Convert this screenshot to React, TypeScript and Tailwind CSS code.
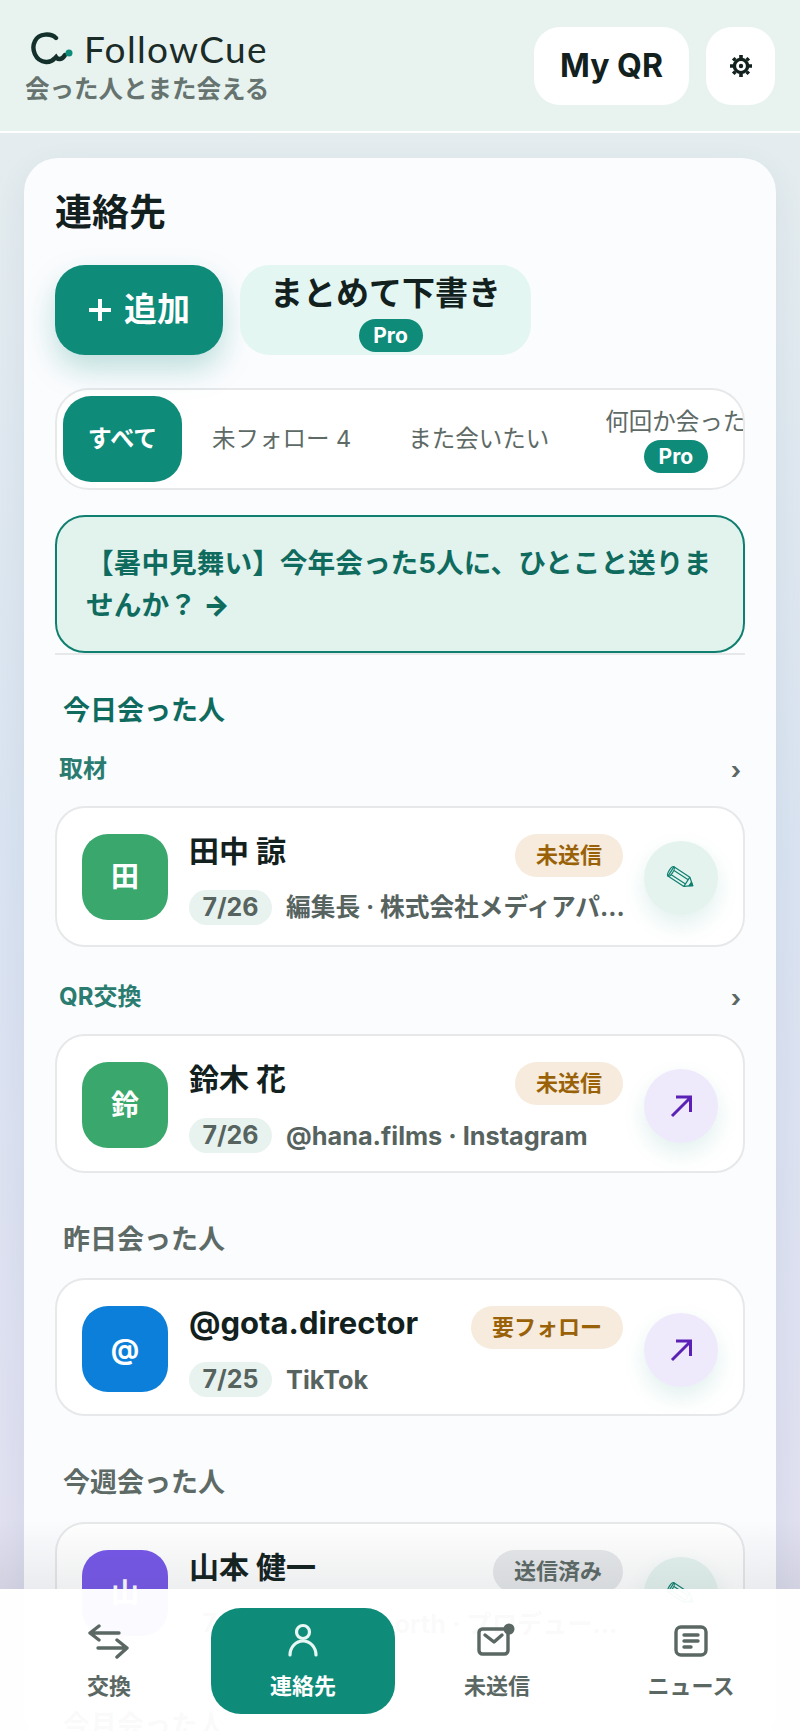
import * as React from 'react';

const FONT = '"Inter", "Noto Sans CJK JP", sans-serif';

function ProBadge() {
  return (
    <span className="flex h-[33px] w-[64px] items-center justify-center rounded-full bg-[#0f8b7a] text-[21px] font-bold leading-none text-white">
      Pro
    </span>
  );
}

function PencilIcon() {
  return (
    <svg width="32" height="26" viewBox="0 0 32 26" fill="none" stroke="#0f8070" strokeWidth="1.2" strokeLinejoin="round">
      <g transform="rotate(33 16 13)">
        <path d="M4 7.5h19l7 5.5-7 5.5H4z" />
        <ellipse cx="4" cy="13" rx="2" ry="5.5" />
        <path d="M6 10.5h17M6 15.5h17M23 7.5v11" />
        <path d="M27 11l3 2-3 2z" fill="#0f8070" />
      </g>
    </svg>
  );
}

function GearIcon() {
  return (
    <svg width="24" height="24" viewBox="-12 -12 24 24" fill="none" stroke="#12211e">
      <circle r="6.6" strokeWidth="3.4" />
      <circle r="2.2" fill="#12211e" stroke="none" />
      <path
        strokeWidth="3.6"
        d="M0-11v3M0 8v3M-11 0h3M8 0h3M-7.8-7.8l2.1 2.1M5.7 5.7l2.1 2.1M7.8-7.8 5.7-5.7M-5.7 5.7l-2.1 2.1"
      />
    </svg>
  );
}

type Contact = {
  initial: string;
  avatar: string;
  name: string;
  nameClass?: string;
  status: string;
  statusClass: string;
  date: string;
  meta: string;
  metaClass?: string;
  action: 'edit' | 'open';
};

function ContactCard({ c, className = '' }: { c: Contact; className?: string }) {
  return (
    <div className={`flex items-start rounded-[30px] border-2 border-[#e6e8ea] bg-white pl-[25px] pr-[25px] pt-[26px] ${className}`}>
      <div
        className={`flex h-[86px] w-[86px] shrink-0 items-center justify-center rounded-[26px] text-[28px] font-bold text-white ${c.avatar}`}
      >
        {c.initial}
      </div>
      <div className="ml-[21px] flex w-[434px] shrink-0 flex-col">
        <div className="flex h-[43px] items-start justify-between">
          <span className={`font-bold leading-[34px] text-[#12211e] ${c.nameClass ?? 'text-[30px]'}`}>{c.name}</span>
          <span className={`flex h-[43px] items-center rounded-full px-[21px] text-[22px] font-bold ${c.statusClass}`}>
            {c.status}
          </span>
        </div>
        <div className="mr-[-6px] mt-[13px] flex items-center">
          <span className="flex h-[35px] w-[83px] shrink-0 items-center justify-center rounded-full bg-[#e8f3ef] text-[25px] font-bold text-[#56635f]">
            {c.date}
          </span>
          <span className={`ml-[14px] truncate font-bold leading-[35px] text-[#56635f] ${c.metaClass ?? 'text-[25.3px]'}`}>{c.meta}</span>
        </div>
      </div>
      <div
        className={`ml-[21px] mt-[7px] flex h-[74px] w-[74px] shrink-0 items-center justify-center rounded-full shadow-[0_10px_22px_rgba(15,139,122,0.12)] ${
          c.action === 'edit' ? 'bg-[#e4f3ee]' : 'bg-[#eeeafc]'
        }`}
      >
        {c.action === 'edit' ? (
          <PencilIcon />
        ) : (
          <svg width="24" height="24" viewBox="0 0 24 24" fill="none" stroke="#5b21b6" strokeWidth="3">
            <path d="M3 22 21 4M7 3h14.5v15" />
          </svg>
        )}
      </div>
    </div>
  );
}

function GroupLabel({ label, className = '' }: { label: string; className?: string }) {
  return (
    <div className={`flex items-center justify-between pl-[4px] pr-[4px] ${className}`}>
      <span className="text-[24px] font-bold leading-[30px] text-[#2a7c70]">{label}</span>
      <span className="mt-[5px] text-[24px] font-bold leading-[30px] text-[#5a6763]">›</span>
    </div>
  );
}

const amber = 'bg-[#f6ebdc] text-[#9a6208]';

const NAV = [
  {
    label: '交換',
    icon: (
      <svg width="42" height="36" viewBox="0 0 42 36" fill="none" stroke="#5a6763" strokeWidth="3.4" strokeLinecap="round" strokeLinejoin="round">
        <path d="M31 10H2M11 3l-9 7 9 7M10 25h29M29 17l10 8-10 9" />
      </svg>
    ),
  },
  {
    label: '連絡先',
    active: true,
    icon: (
      <svg width="34" height="36" viewBox="0 0 34 36" fill="none" stroke="#e8f7f3" strokeWidth="3.2" strokeLinecap="round">
        <circle cx="17" cy="9" r="6.5" />
        <path d="M4 32c0-8 6-14 13-14s13 6 13 14" />
      </svg>
    ),
  },
  {
    label: '未送信',
    icon: (
      <svg width="40" height="36" viewBox="0 0 40 36" fill="none" stroke="#5a6763" strokeWidth="3.4" strokeLinejoin="round">
        <rect x="2" y="6" width="29" height="25" rx="3.5" />
        <path d="m8 12 9 7 8-7" strokeLinecap="round" />
        <circle cx="32" cy="6" r="5.5" fill="#5a6763" stroke="none" />
      </svg>
    ),
  },
  {
    label: 'ニュース',
    icon: (
      <svg width="34" height="34" viewBox="0 0 34 34" fill="none" stroke="#5a6763" strokeWidth="3.4" strokeLinecap="round">
        <rect x="2" y="3" width="30" height="28" rx="5" />
        <path d="M10 11h14M10 17h14M10 23h7" />
      </svg>
    ),
  },
];

export default function App() {
  return (
    <div
      className="relative h-[1731px] w-[800px] overflow-hidden bg-gradient-to-b from-[#e6eeee] via-[#d9e3f1] to-[#e2dff0]"
      style={{ fontFamily: FONT }}
    >
      <header className="flex h-[133px] items-start justify-between border-b-2 border-white bg-[#e8f3ef] pl-[25px] pr-[25px] pt-[27px]">
        <div className="flex flex-col">
          <div className="ml-[6px] flex h-[44px] items-center">
            <svg width="44" height="34" viewBox="0 0 44 34" fill="none" strokeWidth="4.4" strokeLinecap="round">
              <path d="M25 6C20 1 8 1 4 9c-4 8 0 20 11 21 6 .5 8-3 10-5 2 3 6 3 9-2" stroke="#14302b" />
              <circle cx="38" cy="21" r="3.5" fill="#0f8b7a" />
            </svg>
            <span className="ml-[9px] mt-[-2px] text-[37px] leading-none tracking-[0.035em] text-[#1b2b28]" style={{ fontFamily: 'Lato, sans-serif' }}>
              FollowCue
            </span>
          </div>
          <span className="mt-[3px] text-[24.5px] font-bold leading-[30px] text-[#66736f]">会った人とまた会える</span>
        </div>
        <div className="flex gap-[17px]">
          <div className="flex h-[78px] w-[155px] items-center justify-center rounded-[26px] bg-white text-[32px] font-bold text-[#12211e]">
            My QR
          </div>
          <div className="flex h-[78px] w-[69px] items-center justify-center rounded-[26px] bg-white">
            <GearIcon />
          </div>
        </div>
      </header>

      <main className="mx-[24px] mt-[25px] rounded-[34px] bg-[#fbfcfe] px-[31px] pt-[30px] shadow-[0_8px_30px_rgba(60,90,120,0.07)]">
        <h1 className="text-[37px] font-bold leading-[50px] text-[#12211e]">連絡先</h1>

        <div className="mt-[27px] flex gap-[17px]">
          <div className="flex h-[90px] w-[168px] items-center justify-center gap-[12px] rounded-[30px] bg-[#0f8b7a] text-[33px] font-bold text-white shadow-[0_14px_30px_rgba(15,139,122,0.26)]">
            <svg width="24" height="24" viewBox="0 0 24 24" stroke="white" strokeWidth="4">
              <path d="M12 1v22M1 12h22" />
            </svg>
            追加
          </div>
          <div className="flex h-[90px] w-[291px] flex-col items-center rounded-[30px] bg-[#e3f6f1] pt-[6px]">
            <span className="text-[33px] font-bold leading-[44px] text-[#12211e]">まとめて下書き</span>
            <span className="ml-[10px] mt-[4px]">
              <ProBadge />
            </span>
          </div>
        </div>

        <div className="mt-[33px] flex h-[102px] items-center overflow-hidden rounded-[34px] border-2 border-[#e6e8ea] bg-white pl-[6px]">
          <div className="flex h-[86px] w-[119px] shrink-0 items-center justify-center rounded-[28px] bg-[#0f8b7a] text-[24px] font-bold text-white">
            すべて
          </div>
          <span className="ml-[30px] shrink-0 text-[23.5px] text-[#5d6a66]">未フォロー 4</span>
          <span className="ml-[57px] shrink-0 text-[23.5px] text-[#5d6a66]">また会いたい</span>
          <div className="ml-[56px] flex shrink-0 flex-col items-center">
            <span className="text-[23.5px] leading-[32px] text-[#5d6a66]">何回か会った</span>
            <span className="mt-[2px]">
              <ProBadge />
            </span>
          </div>
        </div>

        <div className="mt-[25px] h-[138px] rounded-[30px] border-2 border-[#0f7f6f] bg-[#e2f3ee] pl-[29px] pr-[24px] pt-[25px] text-[27.7px] font-bold leading-[42px] text-[#0f6b5e]">
          【暑中見舞い】今年会った5人に、ひとこと送りませんか？ <span className="font-black">→</span>
        </div>
        <div className="h-[2px] bg-[#e6e8ea]" />

        <h2 className="ml-[8px] mt-[38px] text-[27px] font-bold leading-[36px] text-[#0f6b5e]">今日会った人</h2>

        <GroupLabel label="取材" className="mt-[22px]" />
        <ContactCard
          className="mt-[20px] h-[141px]"
          c={{
            initial: '田',
            avatar: 'bg-[#3aa76d]',
            name: '田中 諒',
            status: '未送信',
            statusClass: amber,
            date: '7/26',
            meta: '編集長 · 株式会社メディアパートナーズ',
            metaClass: 'text-[24.7px]',
            action: 'edit',
          }}
        />

        <GroupLabel label="QR交換" className="mt-[32px]" />
        <ContactCard
          className="mt-[20px] h-[139px]"
          c={{
            initial: '鈴',
            avatar: 'bg-[#3aa76d]',
            name: '鈴木 花',
            status: '未送信',
            statusClass: amber,
            date: '7/26',
            meta: '@hana.films · Instagram',
            action: 'open',
          }}
        />

        <h2 className="ml-[8px] mt-[49px] text-[27px] font-bold leading-[36px] text-[#5d6a66]">昨日会った人</h2>
        <ContactCard
          className="mt-[20px] h-[138px]"
          c={{
            initial: '@',
            avatar: 'bg-[#0b7fd9]',
            name: '@gota.director',
            nameClass: 'text-[31px]',
            status: '要フォロー',
            statusClass: amber,
            date: '7/25',
            meta: 'TikTok',
            action: 'open',
          }}
        />

        <h2 className="ml-[8px] mt-[49px] text-[27px] font-bold leading-[36px] text-[#5d6a66]">今週会った人</h2>
        <ContactCard
          className="mt-[21px] h-[138px]"
          c={{
            initial: '山',
            avatar: 'bg-[#7657e8]',
            name: '山本 健一',
            status: '送信済み',
            statusClass: 'bg-[#e6e8ea] text-[#5d6a66]',
            date: '7/24',
            meta: '@kenji.north · プロデューサー',
            action: 'edit',
          }}
        />
        <h2 className="ml-[8px] mt-[48px] text-[27px] font-bold leading-[36px] text-[#5d6a66]">今月会った人</h2>
      </main>

      <div className="absolute inset-x-0 bottom-[142px] h-[70px] bg-gradient-to-b from-transparent to-[rgba(60,70,80,0.09)]" />
      <nav className="absolute inset-x-0 bottom-0 grid h-[142px] grid-cols-4 gap-[10px] bg-white/[0.97] px-[17px] pt-[19px]">
        {NAV.map((item) => (
          <div
            key={item.label}
            className={`flex h-[106px] flex-col items-center justify-start rounded-[30px] pt-[13px] ${
              item.active ? 'bg-[#0f8b7a] text-white' : 'text-[#5a6763]'
            }`}
          >
            <span className="flex h-[40px] items-center">{item.icon}</span>
            <span className="mt-[10px] text-[22px] font-bold leading-[30px]">{item.label}</span>
          </div>
        ))}
      </nav>
    </div>
  );
}
